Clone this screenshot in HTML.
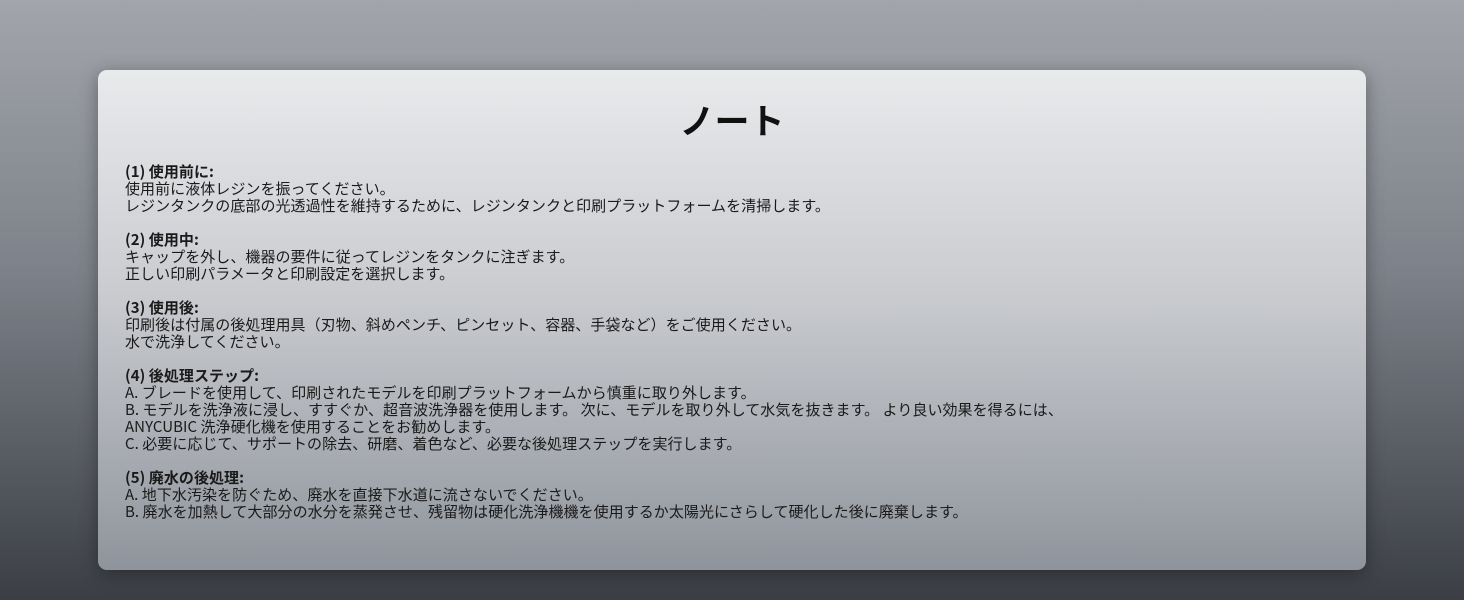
<!DOCTYPE html>
<html><head><meta charset="utf-8"><style>
html,body{margin:0;padding:0;}
body{width:1464px;height:600px;overflow:hidden;background:linear-gradient(180deg,#a2a5ab 0%,#7d8189 45%,#3b3e45 100%);font-family:"Noto Sans CJK JP",sans-serif;position:relative;}
.card{position:absolute;left:98px;top:70px;width:1268px;height:500px;border-radius:9px;background:linear-gradient(180deg,#e9eaec 0%,#c9cbcf 45%,#8f949c 100%);box-shadow:0 4px 18px rgba(0,0,0,0.35);}
h1{position:absolute;left:0;right:0;top:96px;margin:0;text-align:center;font-size:35px;line-height:48px;font-weight:bold;color:#111;}
.txt{position:absolute;left:125px;top:163px;font-size:15px;letter-spacing:0.05px;line-height:17px;color:#1a1a1a;white-space:pre;}
b{font-weight:bold;}
</style></head><body>
<div class="card"></div>
<h1>ノート</h1>
<div class="txt"><b>(1) 使用前に:</b>
使用前に液体レジンを振ってください。
レジンタンクの底部の光透過性を維持するために、レジンタンクと印刷プラットフォームを清掃します。

<b>(2) 使用中:</b>
キャップを外し、機器の要件に従ってレジンをタンクに注ぎます。
正しい印刷パラメータと印刷設定を選択します。

<b>(3) 使用後:</b>
印刷後は付属の後処理用具（刃物、斜めペンチ、ピンセット、容器、手袋など）をご使用ください。
水で洗浄してください。

<b>(4) 後処理ステップ:</b>
A. ブレードを使用して、印刷されたモデルを印刷プラットフォームから慎重に取り外します。
B. モデルを洗浄液に浸し、すすぐか、超音波洗浄器を使用します。 次に、モデルを取り外して水気を抜きます。 より良い効果を得るには、
ANYCUBIC 洗浄硬化機を使用することをお勧めします。
C. 必要に応じて、サポートの除去、研磨、着色など、必要な後処理ステップを実行します。

<b>(5) 廃水の後処理:</b>
A. 地下水汚染を防ぐため、廃水を直接下水道に流さないでください。
B. 廃水を加熱して大部分の水分を蒸発させ、残留物は硬化洗浄機機を使用するか太陽光にさらして硬化した後に廃棄します。</div>
</body></html>
